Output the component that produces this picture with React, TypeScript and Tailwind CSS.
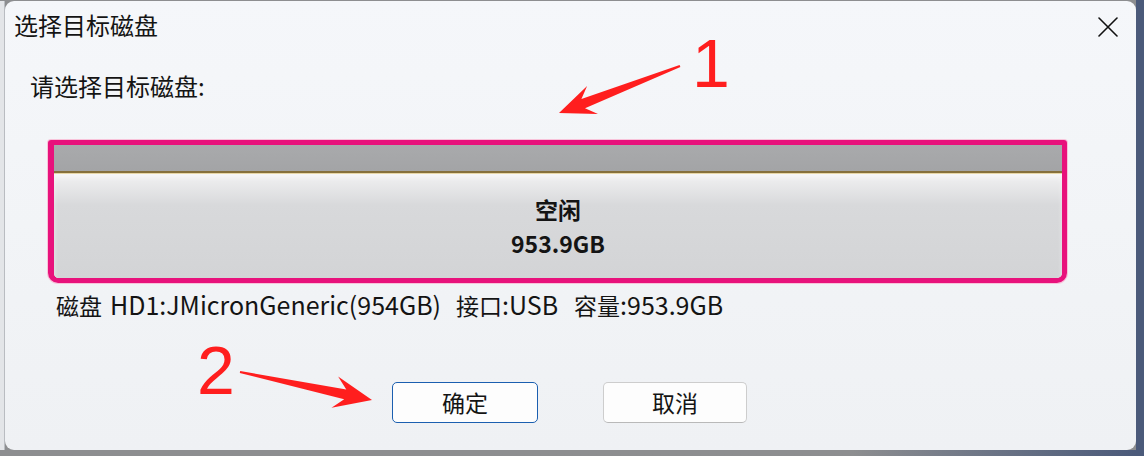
import React from "react";

function arrowPoints(
  tx: number,
  ty: number,
  hx: number,
  hy: number,
  headLen: number,
  headHalf: number,
  shaftHalf: number,
  tailHalf: number
) {
  const dx = hx - tx;
  const dy = hy - ty;
  const L = Math.hypot(dx, dy);
  const ux = dx / L;
  const uy = dy / L;
  const nx = -uy;
  const ny = ux;
  const bx = hx - ux * headLen;
  const by = hy - uy * headLen;
  const sx = hx - ux * headLen * 0.72;
  const sy = hy - uy * headLen * 0.72;
  const pts: [number, number][] = [
    [tx + nx * tailHalf, ty + ny * tailHalf],
    [sx + nx * shaftHalf, sy + ny * shaftHalf],
    [bx + nx * headHalf, by + ny * headHalf],
    [hx, hy],
    [bx - nx * headHalf, by - ny * headHalf],
    [sx - nx * shaftHalf, sy - ny * shaftHalf],
    [tx - nx * tailHalf, ty - ny * tailHalf],
  ];
  return pts.map((p) => `${p[0].toFixed(1)},${p[1].toFixed(1)}`).join(" ");
}

function CloseIcon() {
  return (
    <svg width="20" height="20" viewBox="0 0 20 20" fill="none">
      <path d="M1 1 L19 19 M19 1 L1 19" stroke="#111" strokeWidth="1.6" strokeLinecap="round" />
    </svg>
  );
}

function Dialog() {
  return (
    <div className="relative flex h-[449px] w-[1131px] flex-col rounded-[9px] bg-gradient-to-b from-[#f5f7fa] to-[#eff1f4] font-['Noto_Sans_CJK_SC',sans-serif] text-[#141414]">
      <div className="flex items-start justify-between">
        <div className="ml-[9px] mt-[12px] text-[24px] leading-[24px]">选择目标磁盘</div>
        <div className="mr-[18px] mt-[16px]">
          <CloseIcon />
        </div>
      </div>
      <div className="ml-[25px] mt-[37px] text-[24px] leading-[24px]">请选择目标磁盘:</div>
      <div className="ml-[43px] mt-[42px] flex h-[143px] w-[1019px] flex-col overflow-hidden rounded-t-[3px] rounded-b-[10px] border-[5px] border-l-[6px] border-[#e8127c] shadow-[0_0_0_1px_#f8c3da]">
        <div className="h-[26px] bg-gradient-to-b from-[#a9aaac] to-[#a3a4a6]" />
        <div className="h-[2px] bg-[#86703c]" />
        <div className="h-[1px] bg-[#e6d6a6]" />
        <div className="flex flex-1 flex-col items-center justify-center bg-gradient-to-b from-[#f1f1f2] via-[#d8d9db] via-30% to-[#d3d4d6] font-bold shadow-[inset_0_4px_6px_-2px_#fafafa]">
          <div className="text-[23px] leading-[34px]">空闲</div>
          <div className="text-[23px] leading-[34px]">953.9GB</div>
        </div>
      </div>
      <div className="ml-[51px] mt-[9px] flex h-[24px] items-baseline whitespace-pre text-[23px] leading-[24px]">
        <span>磁盘</span>
        <span className="ml-[8px] text-[25px]">HD1:JMicronGeneric(954GB)</span>
        <span className="ml-[15px]">接口</span>
        <span className="text-[25px]">:USB</span>
        <span className="ml-[16px]">容量</span>
        <span className="text-[25px]">:953.9GB</span>
      </div>
      <div className="ml-[387px] mt-[66px] flex gap-[65px]">
        <button className="flex h-[41px] w-[146px] items-center justify-center rounded-[5px] border-[1.5px] border-[#1b5fb0] bg-[#fdfdfd] text-[23px] text-[#141414]">
          确定
        </button>
        <button className="flex h-[41px] w-[144px] items-center justify-center rounded-[5px] border border-[#cdcdcd] border-b-[#b9b9b9] bg-[#fdfdfd] text-[23px] text-[#141414]">
          取消
        </button>
      </div>
    </div>
  );
}

export default function App() {
  const a1 = arrowPoints(680, 66, 559, 113, 36, 15, 5, 1);
  const a2 = arrowPoints(240, 372, 372, 400, 38, 16, 5, 1);
  return (
    <div className="relative flex h-[456px] w-[1144px] overflow-hidden bg-[#4b5a7a]">
      <div className="flex w-[1136px] flex-col">
        <div className="flex h-[450px] bg-[#8d8e90] pt-[1px]">
          <div className="w-[5px] border-r border-[#b9bcc1] bg-[#e3e5e8]" />
          <Dialog />
        </div>
        <div className="flex-1 bg-gradient-to-r from-[#8d8e90] from-75% to-[#4b5a7a]" />
      </div>
      <div className="flex-1 bg-[#4b5a7a]" />
      <div className="pointer-events-none absolute inset-0">
        <svg width="1144" height="456" className="absolute left-0 top-0">
          <polygon points={a1} fill="#ff1e1e" />
          <polygon points={a2} fill="#ff1e1e" />
        </svg>
        <span className="absolute left-[692px] top-[29px] font-['Liberation_Sans',sans-serif] text-[68px] leading-none text-[#ff1e1e]">
          1
        </span>
        <span className="absolute left-[197px] top-[336px] font-['Liberation_Sans',sans-serif] text-[68px] leading-none text-[#ff1e1e]">
          2
        </span>
      </div>
    </div>
  );
}
